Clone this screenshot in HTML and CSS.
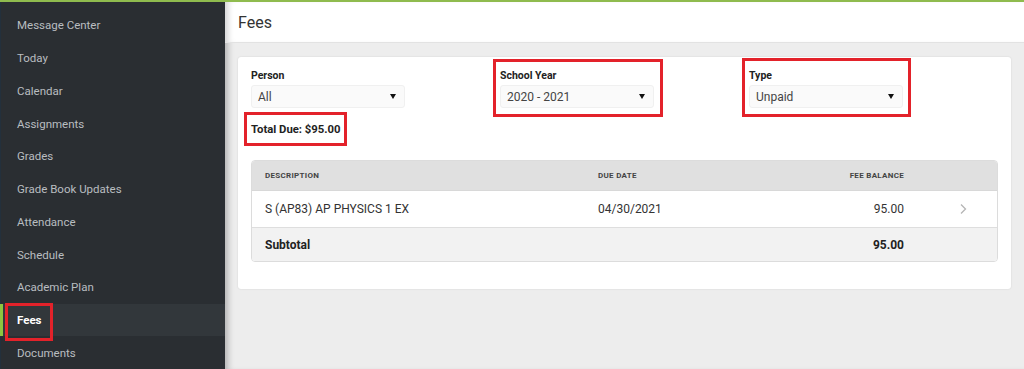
FILE: index.html
```html
<!DOCTYPE html>
<html>
<head>
<meta charset="utf-8">
<link rel="stylesheet" href="styles.css">
</head>
<body>
<div class="app">
  <nav class="sidebar">
    <a class="nav-item">Message Center</a>
    <a class="nav-item">Today</a>
    <a class="nav-item">Calendar</a>
    <a class="nav-item">Assignments</a>
    <a class="nav-item">Grades</a>
    <a class="nav-item">Grade Book Updates</a>
    <a class="nav-item">Attendance</a>
    <a class="nav-item">Schedule</a>
    <a class="nav-item">Academic Plan</a>
    <a class="nav-item active"><span class="mark mark-fees">Fees</span></a>
    <a class="nav-item">Documents</a>
  </nav>
  <main class="main">
    <header class="page-header">Fees</header>
    <section class="content">
      <div class="card">
        <div class="filters">
          <div class="field">
            <div class="label">Person</div>
            <div class="select"><span>All</span><span class="caret"></span></div>
          </div>
          <div class="field mark mark-year">
            <div class="label">School Year</div>
            <div class="select"><span>2020 - 2021</span><span class="caret"></span></div>
          </div>
          <div class="field mark mark-type">
            <div class="label">Type</div>
            <div class="select"><span>Unpaid</span><span class="caret"></span></div>
          </div>
        </div>
        <div class="total"><span class="mark mark-total">Total Due: $95.00</span></div>
        <div class="table">
          <div class="row head">
            <div class="c-desc">DESCRIPTION</div>
            <div class="c-date">DUE DATE</div>
            <div class="c-bal">FEE BALANCE</div>
            <div class="c-go"></div>
          </div>
          <div class="row body">
            <div class="c-desc">S (AP83) AP PHYSICS 1 EX</div>
            <div class="c-date">04/30/2021</div>
            <div class="c-bal">95.00</div>
            <div class="c-go"><svg width="8" height="12" viewBox="0 0 8 12"><path d="M2 1.5 L6.5 6 L2 10.5" fill="none" stroke="#b5b5b5" stroke-width="1.3"/></svg></div>
          </div>
          <div class="row sub">
            <div class="c-desc">Subtotal</div>
            <div class="c-date"></div>
            <div class="c-bal">95.00</div>
            <div class="c-go"></div>
          </div>
        </div>
      </div>
    </section>
  </main>
</div>
</body>
</html>
```

FILE: styles.css
```css
* { box-sizing: border-box; }
html, body { margin: 0; padding: 0; }
body {
  font-family: Roboto, "Liberation Sans", Arial, sans-serif;
  width: 1024px;
  height: 369px;
  overflow: hidden;
  background: #ededed;
  border-top: 2px solid #8fbb4e;
}
.app {
  display: flex;
  height: 367px;
}
.sidebar {
  width: 225px;
  flex: 0 0 225px;
  background: #2a2e32;
  border-left: 1px solid #23303c;
  display: flex;
  flex-direction: column;
  padding-top: 7px;
}
.nav-item {
  display: flex;
  align-items: center;
  height: 32.9px;
  padding-left: 14px;
  font-size: 11.5px;
  color: #b9bdc0;
  border-left: 3px solid transparent;
  margin-left: -1px;
}
.nav-item.active {
  background: #32373b;
  border-left-color: #8cc63f;
  color: #ffffff;
  font-weight: 700;
}
.main {
  flex: 1;
  display: flex;
  flex-direction: column;
  box-shadow: inset 7px 0 6px -4px rgba(0,0,0,0.25);
}
.page-header {
  height: 41px;
  background: #fff;
  display: flex;
  align-items: center;
  padding-left: 13px;
  font-size: 16px;
  color: #333;
  box-shadow: inset 7px 0 6px -4px rgba(0,0,0,0.18);
  border-bottom: 1px solid #e2e2e2;
}
.content {
  flex: 1;
  padding: 14px 13px 0 13px;
}
.card {
  width: 773px;
  height: 232px;
  background: #fff;
  border-radius: 3px;
  box-shadow: 0 0 2px rgba(0,0,0,0.12);
  padding: 12px 13px 0 13px;
}
.filters {
  display: flex;
}
.field {
  width: 249px;
  position: relative;
}
.label {
  font-size: 10.5px;
  font-weight: 700;
  color: #222;
  line-height: 13px;
  margin-bottom: 3px;
}
.select {
  width: 154px;
  height: 23px;
  background: #fafafa;
  border: 1px solid #f0f0f0;
  border-radius: 3px;
  display: flex;
  align-items: center;
  justify-content: space-between;
  padding: 0 6px 0 6px;
  font-size: 12px;
  color: #444;
}
.caret {
  width: 0;
  height: 0;
  border-left: 3.5px solid transparent;
  border-right: 3.5px solid transparent;
  border-top: 5px solid #111;
  margin-right: 2px;
}
.total {
  margin-top: 14px;
  font-size: 11.3px;
  font-weight: 700;
  color: #222;
  line-height: 15px;
}
.mark { position: relative; }
.mark::after {
  content: "";
  position: absolute;
  box-sizing: border-box;
  border: 3px solid #e3222a;
  pointer-events: none;
}
.mark-year::after { left: -7px; top: -10px; width: 170px; height: 58px; }
.mark-type::after { left: -7px; top: -11px; width: 169px; height: 59px; }
.mark-total::after { left: -7px; top: -11px; width: 103px; height: 34px; }
.mark-fees::after { left: -12px; top: -10px; width: 48px; height: 38px; }
.table {
  margin-top: 23px;
  width: 747px;
  border: 1px solid #dcdcdc;
  border-radius: 4px;
  overflow: hidden;
}
.row {
  display: flex;
  align-items: center;
  padding-left: 13px;
}
.row.head {
  height: 29px;
  background: #e0e0e0;
  font-size: 8px;
  font-weight: 700;
  color: #444;
  letter-spacing: 0.3px;
}
.row.body {
  height: 37px;
  background: #fff;
  border-top: 1px solid #d8d8d8;
  font-size: 12px;
  color: #333;
}
.row.sub {
  height: 34px;
  background: #f2f2f2;
  border-top: 1px solid #dedede;
  font-size: 12px;
  font-weight: 700;
  color: #222;
}
.c-desc { width: 333px; }
.c-date { width: 200px; }
.c-bal { width: 106px; text-align: right; }
.c-go { flex: 1; display: flex; justify-content: flex-end; padding-right: 30px; align-items: center; }
```
